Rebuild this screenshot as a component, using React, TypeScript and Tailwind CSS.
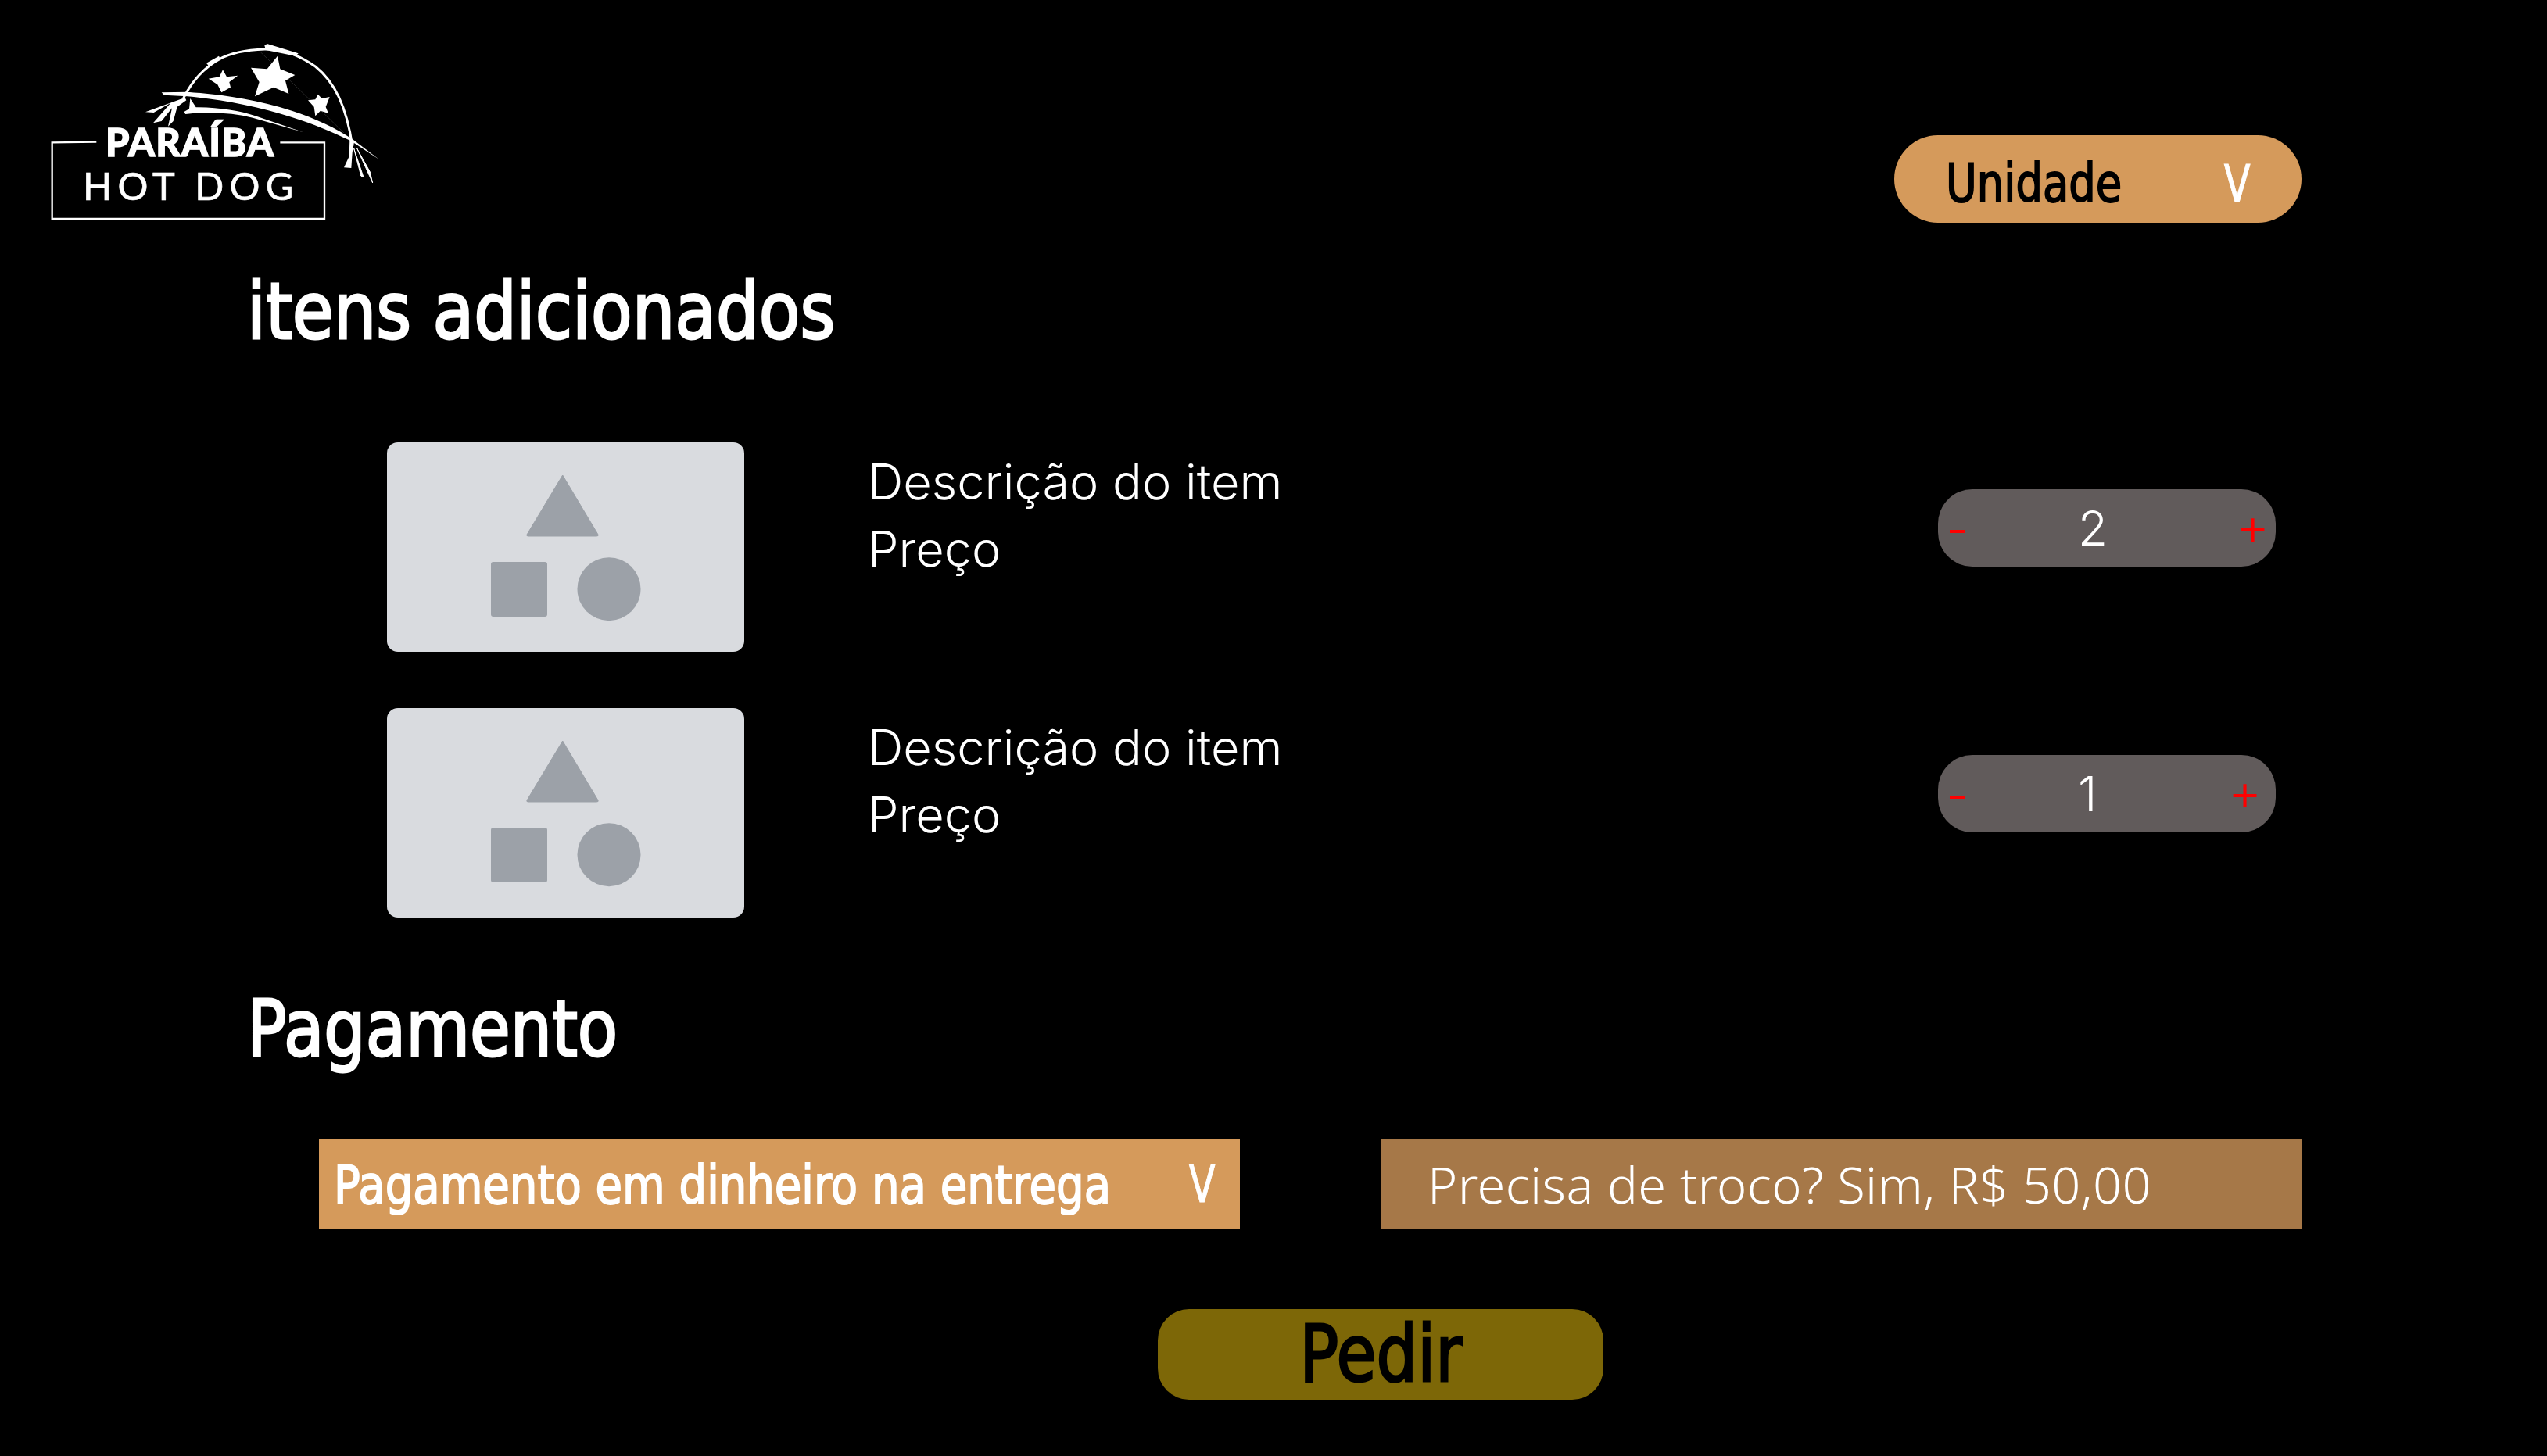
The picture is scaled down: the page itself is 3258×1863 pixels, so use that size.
const items = [
  { id: 1, qty: "2", plusClass: "mr-[8px]" },
  { id: 2, qty: "1", plusClass: "mr-[18px]" },
];

function Logo() {
  return (
    <svg viewBox="0 0 1410 810" className="w-[470px] h-[270px] shrink-0">
      {/* arc */}
      <path d="M585 285 C620 215 665 165 735 130 C790 105 850 98 925 98 C985 105 1040 130 1090 165 C1165 225 1210 320 1232 470" fill="none" stroke="#fff" strokeWidth="9" strokeLinecap="round" />
      <path d="M895 85 L905 78 L1025 115 L1015 125 L900 102 Z M672 152 L720 125 L725 135 L680 162 Z" fill="#fff" />
      <path d="M880 110 L1200 420" stroke="#3a3a3a" strokeWidth="2" />
      {/* branches */}
      <path d="M500 265 L600 263 C720 272 860 290 1000 335 C1090 365 1170 400 1240 450 L1335 522 L1225 450 C1150 415 1080 385 1000 360 C860 315 720 290 600 280 L510 275 Z" fill="#fff" />
      <path d="M610 288 L632 322 C720 322 800 335 860 355 L1045 418 L850 362 C770 342 680 338 592 348 L585 340 L606 328 Z" fill="#fff" />
      {/* fray */}
      <path d="M590 285 L570 292 L438 340 L470 342 L535 305 L468 382 L500 375 L540 325 L525 395 L545 375 L560 320 L595 295 Z" fill="#fff" />
      <path d="M1222 445 L1240 450 L1232 495 L1228 555 L1200 553 L1220 510 Z" fill="#fff" />
      <path d="M1238 480 L1275 590 L1265 585 Z M1250 480 L1310 612 L1300 570 Z" fill="#fff" stroke="#fff" strokeWidth="3" />
      {/* stars */}
      <polygon points="945,125 955,175 1012,198 975,220 988,270 930,245 858,280 875,225 843,170 905,175" fill="#fff" />
      <polygon points="735,178 750,205 793,200 760,225 765,245 730,265 715,235 680,212 722,205" fill="#fff" />
      <polygon points="1100,272 1115,288 1145,282 1130,320 1140,345 1110,335 1090,355 1085,320 1062,295 1090,292" fill="#fff" />
      {/* frame */}
      <path d="M250 455 L80 457 L80 750 L1125 750 L1125 457 L955 457" fill="none" stroke="#fff" strokeWidth="7" />
      <text x="285" y="510" fill="#fff" stroke="#fff" strokeWidth="4" fontFamily="Lato, sans-serif" fontWeight="900" fontSize="146" textLength="645" lengthAdjust="spacing">PARAÍBA</text>
      <text x="198" y="678" fill="#fff" stroke="#fff" strokeWidth="2" fontFamily="Lato, sans-serif" fontWeight="400" fontSize="146" textLength="808" lengthAdjust="spacing">HOT DOG</text>
    </svg>
  );
}

function Placeholder() {
  return (
    <div className="w-[457px] h-[268px] shrink-0 rounded-[14px] bg-[#d9dbdf]">
      <svg viewBox="0 0 457 268" className="w-full h-full">
        <path d="M224.7 42 L270 118 Q271 120 268 120 L181 120 Q178 120 179 118 Z" fill="#9ca1a8" stroke="#9ca1a8" strokeWidth="1" strokeLinejoin="round" />
        <rect x="133" y="153" width="72" height="70" rx="3" fill="#9ca1a8" />
        <circle cx="284" cy="187.7" r="40.5" fill="#9ca1a8" />
      </svg>
    </div>
  );
}

function Stepper({ qty, plusClass }: { qty: string; plusClass: string }) {
  return (
    <div className="ml-auto mr-[347px] mt-[60px] w-[432px] h-[99px] rounded-[44px] bg-[#615b5b] flex items-center font-['Inter',sans-serif] font-light text-white">
      <span className="ml-[15px] w-[20px] h-[4px] mt-[8px] bg-[#ff0000]"></span>
      <span className="ml-[144px] text-[62px] leading-none">{qty}</span>
      <span className={`ml-auto mb-[6px] text-[66px] leading-none text-[#ff0000] ${plusClass}`}>+</span>
    </div>
  );
}

export default function App() {
  return (
    <div className="w-[3258px] h-[1863px] bg-black overflow-hidden font-['DejaVu_Sans',sans-serif]">
      <div className="flex justify-between items-start pl-[40px] pr-[314px] pt-[30px]">
        <Logo />
        <div className="mt-[143px] w-[521px] h-[112px] rounded-[56px] bg-[#d59a5b] flex items-center justify-between pl-[66px] pr-[60px]">
          <span className="inline-block mt-[12px] origin-left scale-x-[0.8] text-[68px] leading-none text-black [-webkit-text-stroke:2px_black]">Unidade</span>
          <span className="inline-block mt-[14px] scale-x-[0.75] text-[66px] leading-none text-white [-webkit-text-stroke:1px_white]">V</span>
        </div>
      </div>

      <h2 className="mt-[44px] pl-[316px] h-[110px] text-[100px] leading-[110px] text-white font-normal">
        <span className="inline-block origin-left scale-x-[0.861] [-webkit-text-stroke:3px_white]">itens adicionados</span>
      </h2>

      <div className="mt-[112px] flex flex-col gap-[72px]">
        {items.map((item) => (
          <div className="flex items-start pl-[495px]" key={item.id}>
            <Placeholder />
            <div className="ml-[158px] mt-[7px] text-[63px] leading-[86px] font-light text-white font-['Inter',sans-serif]">
              <p>Descrição do item</p>
              <p>Preço</p>
            </div>
            <Stepper qty={item.qty} plusClass={item.plusClass} />
          </div>
        ))}
      </div>

      <h2 className="mt-[88px] pl-[316px] h-[110px] text-[100px] leading-[110px] text-white font-normal">
        <span className="inline-block origin-left scale-x-[0.84] [-webkit-text-stroke:3px_white]">Pagamento</span>
      </h2>

      <div className="mt-[85px] flex gap-[180px] pl-[408px]">
        <div className="w-[1178px] h-[116px] bg-[#d59a5b] flex items-center justify-between pl-[19px] pr-[26px] text-white">
          <span className="w-[989px] shrink-0 inline-block mt-[4px] origin-left scale-x-[0.825] text-[68px] leading-none whitespace-nowrap [-webkit-text-stroke:2px_white]">Pagamento em dinheiro na entrega</span>
          <span className="inline-block mt-[2px] scale-x-[0.75] text-[66px] leading-none [-webkit-text-stroke:1px_white]">V</span>
        </div>
        <div className="w-[1178px] h-[116px] bg-[#a67848] flex items-center pl-[60px] text-[65px] tracking-[0.4px] leading-none font-light text-white font-['Noto_Sans',sans-serif]">
          Precisa de troco? Sim, R$ 50,00
        </div>
      </div>

      <div className="mt-[102px] ml-[1481px] w-[570px] h-[116px] rounded-[40px] bg-[#7d6707] flex items-center justify-center">
        <span className="inline-block scale-x-[0.83] text-[100px] leading-none text-black [-webkit-text-stroke:3px_black]">Pedir</span>
      </div>
    </div>
  );
}
